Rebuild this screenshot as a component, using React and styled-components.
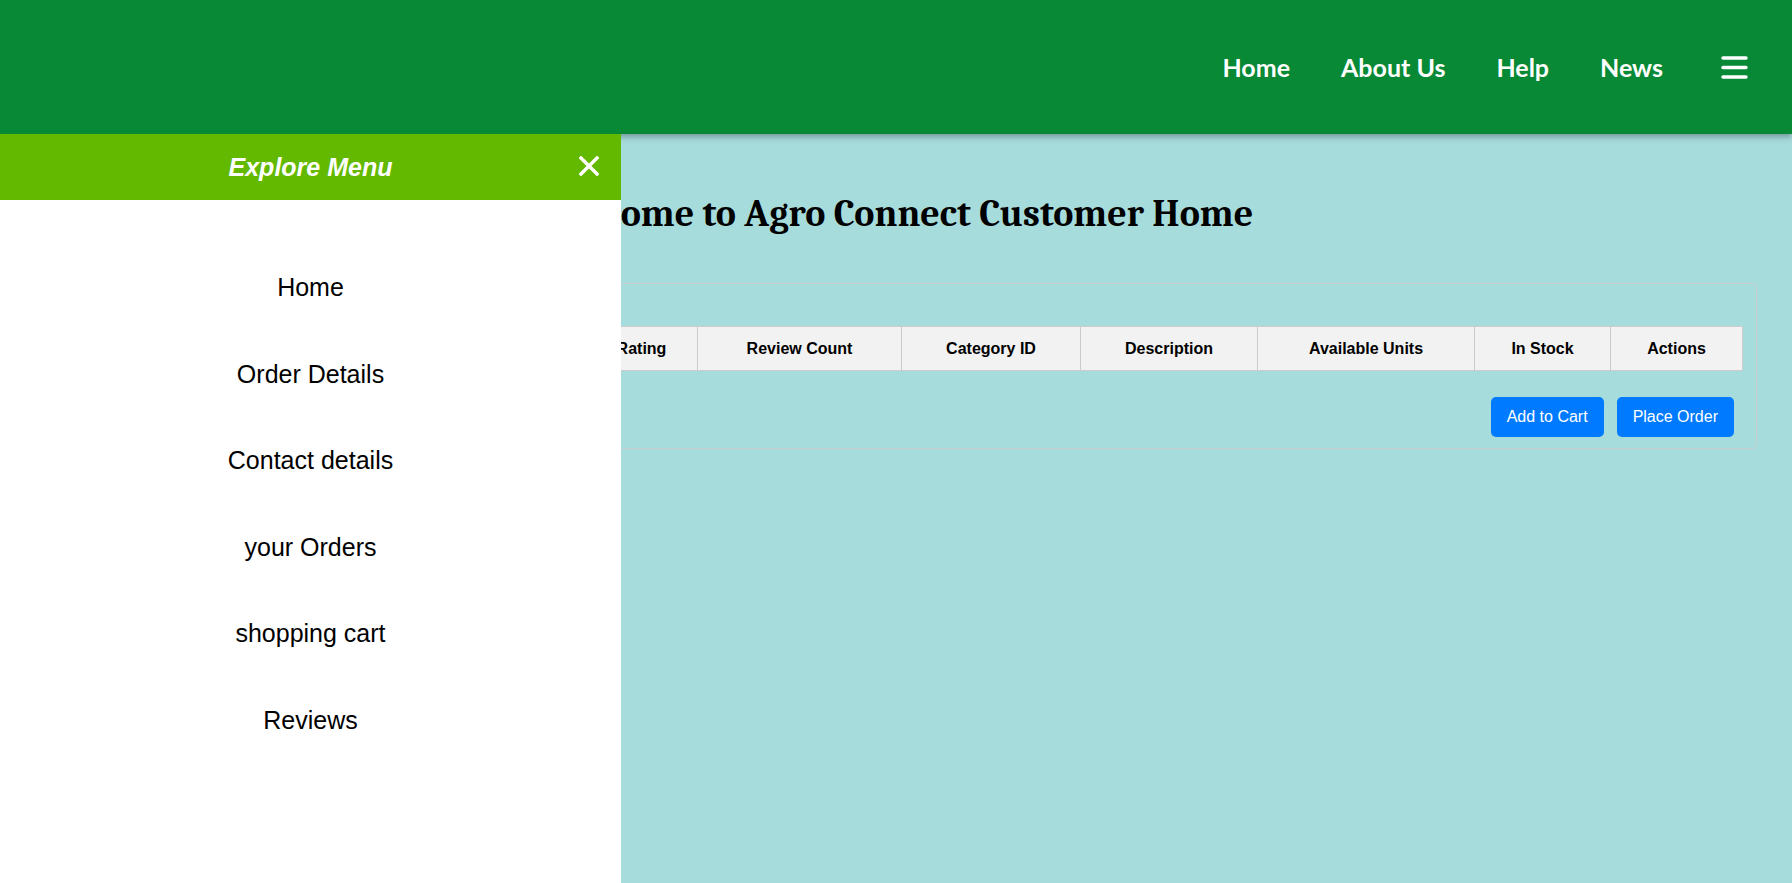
import React from 'react'
import styled, { createGlobalStyle } from 'styled-components';

const GlobalStyle = createGlobalStyle`
    body {
        margin: 0;
        background-color: #a7dcdc;
        font-family: "Liberation Sans", Arial, sans-serif;
    }
`;

const navLinks = ['Home', 'About Us', 'Help', 'News'];
const drawerLinks = ['Home', 'Order Details', 'Contact details', 'your Orders', 'shopping cart', 'Reviews'];

// first four sit under the drawer and share what is left over
const columns = [
    { label: 'Product ID' },
    { label: 'Product Name' },
    { label: 'Price' },
    { label: 'Image' },
    { label: 'Rating', width: 112 },
    { label: 'Review Count', width: 204 },
    { label: 'Category ID', width: 179 },
    { label: 'Description', width: 177 },
    { label: 'Available Units', width: 217 },
    { label: 'In Stock', width: 136 },
    { label: 'Actions', width: 132 },
];

function App() {
    return (
        <>
            <GlobalStyle />
            <Header>
                <Nav>
                    {navLinks.map((link) => (
                        <NavLink key={link}>{link}</NavLink>
                    ))}
                    <MenuToggle aria-label="menu">
                        <svg width="27" height="24" viewBox="0 0 27 24">
                            <g stroke="#fff" strokeWidth="3.4" strokeLinecap="round">
                                <line x1="2" y1="3" x2="25" y2="3" />
                                <line x1="2" y1="12.5" x2="25" y2="12.5" />
                                <line x1="2" y1="22" x2="25" y2="22" />
                            </g>
                        </svg>
                    </MenuToggle>
                </Nav>
            </Header>

            <Main>
                <Title>Welcome to Agro Connect Customer Home</Title>
                <Card>
                    <Table>
                        <thead>
                            <tr>
                                {columns.map((col) => (
                                    <Th key={col.label} $width={col.width}>{col.label}</Th>
                                ))}
                            </tr>
                        </thead>
                    </Table>
                    <ActionRow>
                        <Button>Add to Cart</Button>
                        <Button>Place Order</Button>
                    </ActionRow>
                </Card>
            </Main>

            <Drawer>
                <DrawerHead>
                    <DrawerTitle>Explore Menu</DrawerTitle>
                    <CloseButton aria-label="close">
                        <svg width="20" height="20" viewBox="0 0 20 20">
                            <g stroke="#fff" strokeWidth="3.4" strokeLinecap="square">
                                <line x1="2" y1="2" x2="18" y2="18" />
                                <line x1="18" y1="2" x2="2" y2="18" />
                            </g>
                        </svg>
                    </CloseButton>
                </DrawerHead>
                <DrawerList>
                    {drawerLinks.map((link) => (
                        <DrawerItem key={link}>{link}</DrawerItem>
                    ))}
                </DrawerList>
            </Drawer>
        </>
    )
}

export default App

const Header = styled.header`
    position: relative;
    z-index: 5;
    display: flex;
    align-items: center;
    justify-content: flex-end;
    height: 134px;
    padding-right: 44px;
    background-color: #078935;
    box-shadow: 0 3px 6px rgba(0, 0, 0, 0.3);
`;
const Nav = styled.nav`
    display: flex;
    align-items: center;
    gap: 51px;
`;
const NavLink = styled.a`
    color: #fff;
    font-family: "Comic Sans MS", Lato, sans-serif;
    font-weight: 700;
    font-size: 25px;
    cursor: pointer;
`;
const MenuToggle = styled.button`
    display: flex;
    margin-left: 7px;
    padding: 0;
    border: none;
    background: none;
    cursor: pointer;
`;
const Main = styled.main`
    padding: 0 35px;
`;
const Title = styled.h1`
    margin: 58px 0 47px;
    text-align: center;
    font-family: Cambria, "Liberation Serif", serif;
    font-size: 38px;
    line-height: 44px;
    color: #000;
`;
const Card = styled.div`
    padding: 42px 13px 11px;
    border: 1px solid #c9cfcf;
    border-radius: 5px;
`;
const Table = styled.table`
    width: 100%;
    border-collapse: collapse;
    table-layout: fixed;
`;
const Th = styled.th`
    box-sizing: border-box;
    width: ${(p) => (p.$width ? `${p.$width}px` : 'auto')};
    padding: 12px 8px;
    background-color: #f2f2f2;
    border: 1px solid #cccccc;
    font-size: 16px;
    line-height: 19px;
    font-weight: 700;
    color: #000;
    text-align: center;
`;
const ActionRow = styled.div`
    display: flex;
    justify-content: flex-end;
    gap: 13px;
    margin-top: 26px;
    padding-right: 9px;
`;
const Button = styled.button`
    padding: 10px 16px;
    border: none;
    border-radius: 5px;
    background-color: #007bff;
    color: #fff;
    font-family: "Liberation Sans", Arial, sans-serif;
    font-size: 16px;
    line-height: 20px;
    cursor: pointer;
`;
const Drawer = styled.aside`
    position: fixed;
    z-index: 10;
    top: 134px;
    bottom: 0;
    left: 0;
    width: 621px;
    background-color: #fff;
`;
const DrawerHead = styled.div`
    position: relative;
    display: flex;
    align-items: center;
    justify-content: center;
    height: 66px;
    background-color: #63b900;
`;
const DrawerTitle = styled.h2`
    margin: 0;
    color: #fff;
    font-size: 25px;
    font-style: italic;
    font-weight: 700;
`;
const CloseButton = styled.button`
    position: absolute;
    right: 22px;
    top: 22px;
    display: flex;
    padding: 0;
    border: none;
    background: none;
    cursor: pointer;
`;
const DrawerList = styled.ul`
    margin: 0;
    padding: 44px 0 0;
    list-style: none;
`;
const DrawerItem = styled.li`
    padding: 30px 0;
    font-size: 25px;
    line-height: 26.6px;
    color: #000;
    text-align: center;
    cursor: pointer;
`;
